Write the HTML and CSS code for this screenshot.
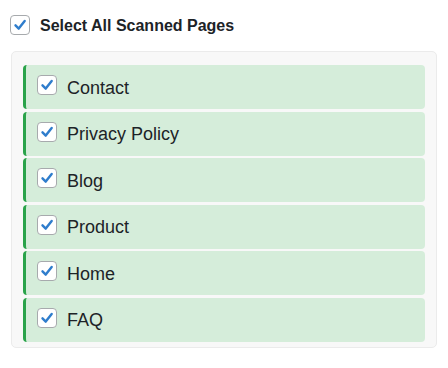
FILE: index.html
```html
<!DOCTYPE html>
<html>
<head>
<meta charset="utf-8">
<link rel="stylesheet" href="styles.css">
</head>
<body>
<div class="wrap">
  <label class="select-all">
    <span class="cb"><svg viewBox="0 0 20 20"><path d="M5 10.4 L8.6 14 L15.2 5.6" /></svg></span>
    <span class="select-all-text">Select All Scanned Pages</span>
  </label>
  <div class="panel">
    <div class="item"><span class="cb"><svg viewBox="0 0 20 20"><path d="M5 10.4 L8.6 14 L15.2 5.6" /></svg></span><span class="label">Contact</span></div>
    <div class="item"><span class="cb"><svg viewBox="0 0 20 20"><path d="M5 10.4 L8.6 14 L15.2 5.6" /></svg></span><span class="label">Privacy Policy</span></div>
    <div class="item"><span class="cb"><svg viewBox="0 0 20 20"><path d="M5 10.4 L8.6 14 L15.2 5.6" /></svg></span><span class="label">Blog</span></div>
    <div class="item"><span class="cb"><svg viewBox="0 0 20 20"><path d="M5 10.4 L8.6 14 L15.2 5.6" /></svg></span><span class="label">Product</span></div>
    <div class="item"><span class="cb"><svg viewBox="0 0 20 20"><path d="M5 10.4 L8.6 14 L15.2 5.6" /></svg></span><span class="label">Home</span></div>
    <div class="item"><span class="cb"><svg viewBox="0 0 20 20"><path d="M5 10.4 L8.6 14 L15.2 5.6" /></svg></span><span class="label">FAQ</span></div>
  </div>
</div>
</body>
</html>
```
FILE: styles.css
```css
html, body {
  margin: 0;
  padding: 0;
  background: #ffffff;
}
body {
  font-family: "Liberation Sans", Arial, sans-serif;
  color: #1d2327;
}
.wrap {
  padding: 15px 11px 0 11px;
  width: 426px;
}
.select-all {
  display: flex;
  align-items: center;
  height: 20px;
  margin-bottom: 16px;
  margin-left: -1px;
}
.select-all .cb {
  margin-right: 10px;
}
.select-all-text {
  font-size: 16px;
  font-weight: 700;
  color: #1d2327;
  padding-top: 2px;
}
.cb {
  width: 20px;
  height: 20px;
  box-sizing: border-box;
  border: 1px solid #a7aaad;
  border-radius: 4px;
  background: #ffffff;
  display: flex;
  align-items: center;
  justify-content: center;
  flex: none;
}
.cb svg {
  width: 20px;
  height: 20px;
  fill: none;
  stroke: #2f7dcc;
  stroke-width: 2.7;
  stroke-linecap: round;
  stroke-linejoin: round;
}
.panel {
  background: #f8f8f8;
  border: 1px solid #ebebeb;
  border-radius: 5px;
  padding: 13px 11px 5px 11px;
  display: flex;
  flex-direction: column;
  gap: 2.5px;
}
.item {
  height: 44px;
  box-sizing: border-box;
  background: #d5edda;
  border-left: 3px solid #2aa34a;
  border-radius: 4px;
  display: flex;
  align-items: center;
  padding-left: 11px;
}
.item .cb {
  margin-right: 10px;
  margin-top: -4px;
}
.label {
  font-size: 18px;
  color: #1d2327;
  padding-top: 2px;
}
```
